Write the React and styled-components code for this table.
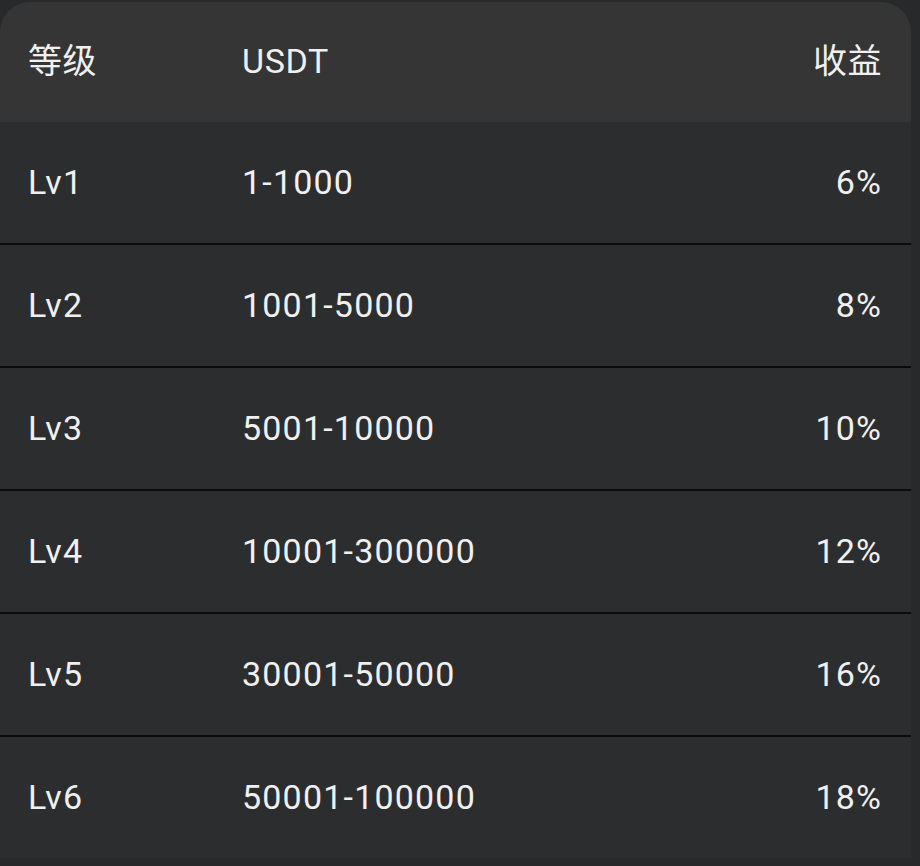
import React from "react";
import styled, { createGlobalStyle } from "styled-components";

const Global = createGlobalStyle`
  html, body { margin: 0; padding: 0; background: #28292a; }
  body { font-family: Roboto, "Noto Sans CJK SC", sans-serif; }
`;

const Card = styled.div`
  width: 911px;
  margin-top: 2px;
  border-radius: 30px 30px 0 0;
  overflow: hidden;
  background: #2c2d2f;
`;

const Row = styled.div`
  display: grid;
  grid-template-columns: 214px 1fr 200px;
  align-items: center;
  box-sizing: border-box;
  height: ${(p) => (p.$head ? "120px" : p.$divider ? "123px" : "121px")};
  padding: 0 30px 2px 28px;
  background: ${(p) => (p.$head ? "#353535" : "#2c2d2f")};
  border-top: ${(p) => (p.$divider ? "2px solid #0b0c0d" : "none")};
  color: #f0f0f0;
  font-size: 34px;
  letter-spacing: ${(p) => (p.$head ? "0.6px" : "1.2px")};
  font-family: Roboto, "Noto Sans CJK SC", sans-serif;
`;

const Cell = styled.div`
  text-align: ${(p) => (p.$right ? "right" : "left")};
  white-space: nowrap;
  line-height: 1;
  margin-right: ${(p) => (p.$right ? "-1.2px" : "0")};
`;

const data = [
  ["Lv1", "1-1000", "6%"],
  ["Lv2", "1001-5000", "8%"],
  ["Lv3", "5001-10000", "10%"],
  ["Lv4", "10001-300000", "12%"],
  ["Lv5", "30001-50000", "16%"],
  ["Lv6", "50001-100000", "18%"],
];

export default function App() {
  return (
    <>
      <Global />
      <Card>
        <Row $head>
          <Cell>等级</Cell>
          <Cell>USDT</Cell>
          <Cell $right>收益</Cell>
        </Row>
        {data.map(([lv, range, pct], i) => (
          <Row key={lv} $divider={i > 0}>
            <Cell>{lv}</Cell>
            <Cell>{range}</Cell>
            <Cell $right>{pct}</Cell>
          </Row>
        ))}
      </Card>
    </>
  );
}
